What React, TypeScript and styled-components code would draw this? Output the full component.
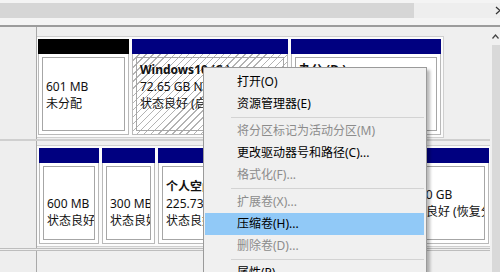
import React from 'react';
import styled, { createGlobalStyle, css } from 'styled-components';

const Global = createGlobalStyle`
  html, body { margin: 0; padding: 0; background: #efefef; overflow: hidden; }
  body { font-family: "Noto Sans", "Noto Sans CJK SC", sans-serif; font-size: 12px; color: #000; }
  * { box-sizing: border-box; }
`;

const Screen = styled.div`
  position: relative;
  width: 500px;
  height: 272px;
  overflow: hidden;
  background: #efefef;
  display: flex;
  flex-direction: column;
`;

const TopArea = styled.div`
  height: 27px;
  flex: none;
  background: #f4f4f4;
  padding-top: 3px;
  border-bottom: 2px solid #9c9c9c;
`;

const HScroll = styled.div`
  height: 15px;
  display: flex;
`;

const HThumb = styled.div`
  width: 414px;
  background: #d6d6d6;
`;

const HTrack = styled.div`
  flex: 1;
  background: #eeeeee;
  display: flex;
  justify-content: flex-end;
  align-items: center;
  overflow: hidden;
`;

const Body = styled.div`
  flex: 1;
  display: flex;
  min-height: 0;
`;

const MainCol = styled.div`
  width: 490px;
  display: flex;
  flex-direction: column;
`;

const DiskRow = styled.div<{ $h?: number; $pt: number; $pl: number; $bottom?: string }>`
  display: flex;
  flex: ${p => (p.$h ? 'none' : '1')};
  height: ${p => (p.$h ? `${p.$h}px` : 'auto')};
  border-bottom: ${p => p.$bottom ?? 'none'};
  --pt: ${p => p.$pt}px;
  --pl: ${p => p.$pl}px;
`;

const DiskLabel = styled.div`
  width: 37px;
  flex: none;
  background: #eeeeee;
  border-right: 1px solid #a9a9a9;
`;

const PartArea = styled.div`
  flex: 1;
  padding-top: var(--pt);
  display: flex;
  align-items: flex-start;
`;

const Frame = styled.div`
  display: flex;
  gap: 3px;
  padding: 2px 2px 2px var(--pl);
  background: #fbfbfb;
  border: 1px solid #cfcfcf;
  border-left: none;
  height: 102px;
`;

const Partition = styled.div<{ $w: number }>`
  width: ${p => p.$w}px;
  flex: none;
  display: flex;
  flex-direction: column;
`;

const PartHeader = styled.div<{ $color: string }>`
  height: 15px;
  flex: none;
  background: ${p => p.$color};
`;

const PartBody = styled.div<{ $hatched?: boolean }>`
  flex: 1;
  padding: 3px;
  border: 1px solid #b9b9b9;
  border-top: none;
  background: #ffffff;
  ${p =>
    p.$hatched &&
    css`
      background: repeating-linear-gradient(135deg, #ffffff 0 4px, #b3b3b3 4px 5px);
    `}
`;

const PartInner = styled.div<{ $pt: number; $hatched?: boolean }>`
  height: 100%;
  border: 1px solid #a6a6a6;
  overflow: hidden;
  white-space: nowrap;
  padding: ${p => p.$pt}px 2px 0 3px;
  line-height: 17px;
  font-size: 12px;
  color: #111;
  background: ${p => (p.$hatched ? 'transparent' : '#ffffff')};
`;

const PartTitle = styled.div`
  font-weight: 700;
  height: 17px;
`;

const PartLine = styled.div`
  height: 17px;
`;

const VScroll = styled.div`
  flex: 1;
  background: #f0f0f0;
  display: flex;
  flex-direction: column;
  align-items: flex-start;
`;

const VArrow = styled.div`
  height: 18px;
  width: 100%;
  display: flex;
  align-items: center;
  padding-left: 2px;
`;

const VThumb = styled.div`
  flex: 1;
  width: 8px;
  margin-left: 2px;
  background: #d9d9d9;
`;

const Menu = styled.div`
  position: absolute;
  left: 203px;
  top: 67px;
  width: 224px;
  background: #f0f0f0;
  border: 1px solid #9a9a9a;
  box-shadow: 3px 3px 3px rgba(0, 0, 0, 0.28);
  padding: 3px 2px 3px 1px;
  font-family: "Noto Sans", "Noto Sans CJK SC", sans-serif;
  font-size: 12px;
`;

const MenuItem = styled.div<{ $disabled?: boolean; $active?: boolean }>`
  height: 22px;
  line-height: 22px;
  padding-left: 32px;
  white-space: nowrap;
  color: ${p => (p.$disabled ? '#8c8c8c' : '#000')};
  background: ${p => (p.$active ? '#91c9f7' : 'transparent')};
`;

const MenuSep = styled.div`
  height: 5px;
  margin-left: 26px;
  padding-top: 2px;
  &::after {
    content: '';
    display: block;
    border-top: 1px solid #d3d3d3;
  }
`;

type Part = {
  w: number;
  color: string;
  hatched?: boolean;
  pt: number;
  title?: string;
  lines: string[];
};

const row1: Part[] = [
  { w: 91, color: '#000000', pt: 3, lines: ['\u00a0', '601 MB', '未分配'] },
  { w: 156, color: '#000080', hatched: true, pt: 3, title: 'Windows10  (C:)', lines: ['72.65 GB NTFS', '状态良好 (启动, 页面文件, 故障转储, 主分区)'] },
  { w: 150, color: '#000080', pt: 3, title: '办公  (D:)', lines: ['232.88 GB NTFS', '状态良好 (主分区)'] },
];

const row2: Part[] = [
  { w: 60, color: '#000080', pt: 11, lines: ['\u00a0', '600 MB', '状态良好 (EFI 系统分区)'] },
  { w: 53, color: '#000080', pt: 11, lines: ['\u00a0', '300 MB', '状态良好 (OEM 分区)'] },
  { w: 233, color: '#000080', pt: 11, title: '个人空间  (E:)', lines: ['225.73 GB NTFS', '状态良好 (主分区)'] },
  { w: 95, color: '#000080', pt: 19, lines: ['10.00 GB', '状态良好 (恢复分区)'] },
];

const menu: Array<{ label?: string; disabled?: boolean; active?: boolean; sep?: boolean }> = [
  { label: '打开(O)' },
  { label: '资源管理器(E)' },
  { sep: true },
  { label: '将分区标记为活动分区(M)', disabled: true },
  { label: '更改驱动器号和路径(C)...' },
  { label: '格式化(F)...', disabled: true },
  { sep: true },
  { label: '扩展卷(X)...', disabled: true },
  { label: '压缩卷(H)...', active: true },
  { label: '删除卷(D)...', disabled: true },
  { sep: true },
  { label: '属性(P)' },
];

function Partitions({ parts }: { parts: Part[] }) {
  return (
    <>
      {parts.map((p, i) => (
        <Partition key={i} $w={p.w}>
          <PartHeader $color={p.color} />
          <PartBody $hatched={p.hatched}>
            <PartInner $pt={p.pt} $hatched={p.hatched}>
              {p.title && <PartTitle>{p.title}</PartTitle>}
              {p.lines.map((l, j) => (
                <PartLine key={j}>{l}</PartLine>
              ))}
            </PartInner>
          </PartBody>
        </Partition>
      ))}
    </>
  );
}

export default function App() {
  return (
    <Screen>
      <Global />
      <TopArea>
        <HScroll>
          <HThumb />
          <HTrack>
            <svg width="8" height="9" viewBox="0 0 8 9" style={{ marginRight: -3 }}>
              <path d="M1 1 L5 4.5 L1 8" stroke="#333" strokeWidth="1.3" fill="none" />
            </svg>
          </HTrack>
        </HScroll>
      </TopArea>
      <Body>
        <MainCol>
          <DiskRow $h={114} $pt={9} $pl={1} $bottom="2px solid #cfcfcf">
            <DiskLabel />
            <PartArea>
              <Frame>
                <Partitions parts={row1} />
              </Frame>
            </PartArea>
          </DiskRow>
          <DiskRow $h={110} $pt={4} $pl={2} $bottom="3px double #bdbdbd">
            <DiskLabel />
            <PartArea>
              <Frame>
                <Partitions parts={row2} />
              </Frame>
            </PartArea>
          </DiskRow>
          <DiskRow $pt={0} $pl={0}>
            <DiskLabel />
            <PartArea />
          </DiskRow>
        </MainCol>
        <VScroll>
          <VArrow>
            <svg width="7" height="5" viewBox="0 0 7 5">
              <path d="M0.5 4.5 L3.5 1 L6.5 4.5" stroke="#444" strokeWidth="1.2" fill="none" />
            </svg>
          </VArrow>
          <VThumb />
        </VScroll>
      </Body>
      <Menu>
        {menu.map((m, i) =>
          m.sep ? (
            <MenuSep key={i} />
          ) : (
            <MenuItem key={i} $disabled={m.disabled} $active={m.active}>
              {m.label}
            </MenuItem>
          )
        )}
      </Menu>
    </Screen>
  );
}
